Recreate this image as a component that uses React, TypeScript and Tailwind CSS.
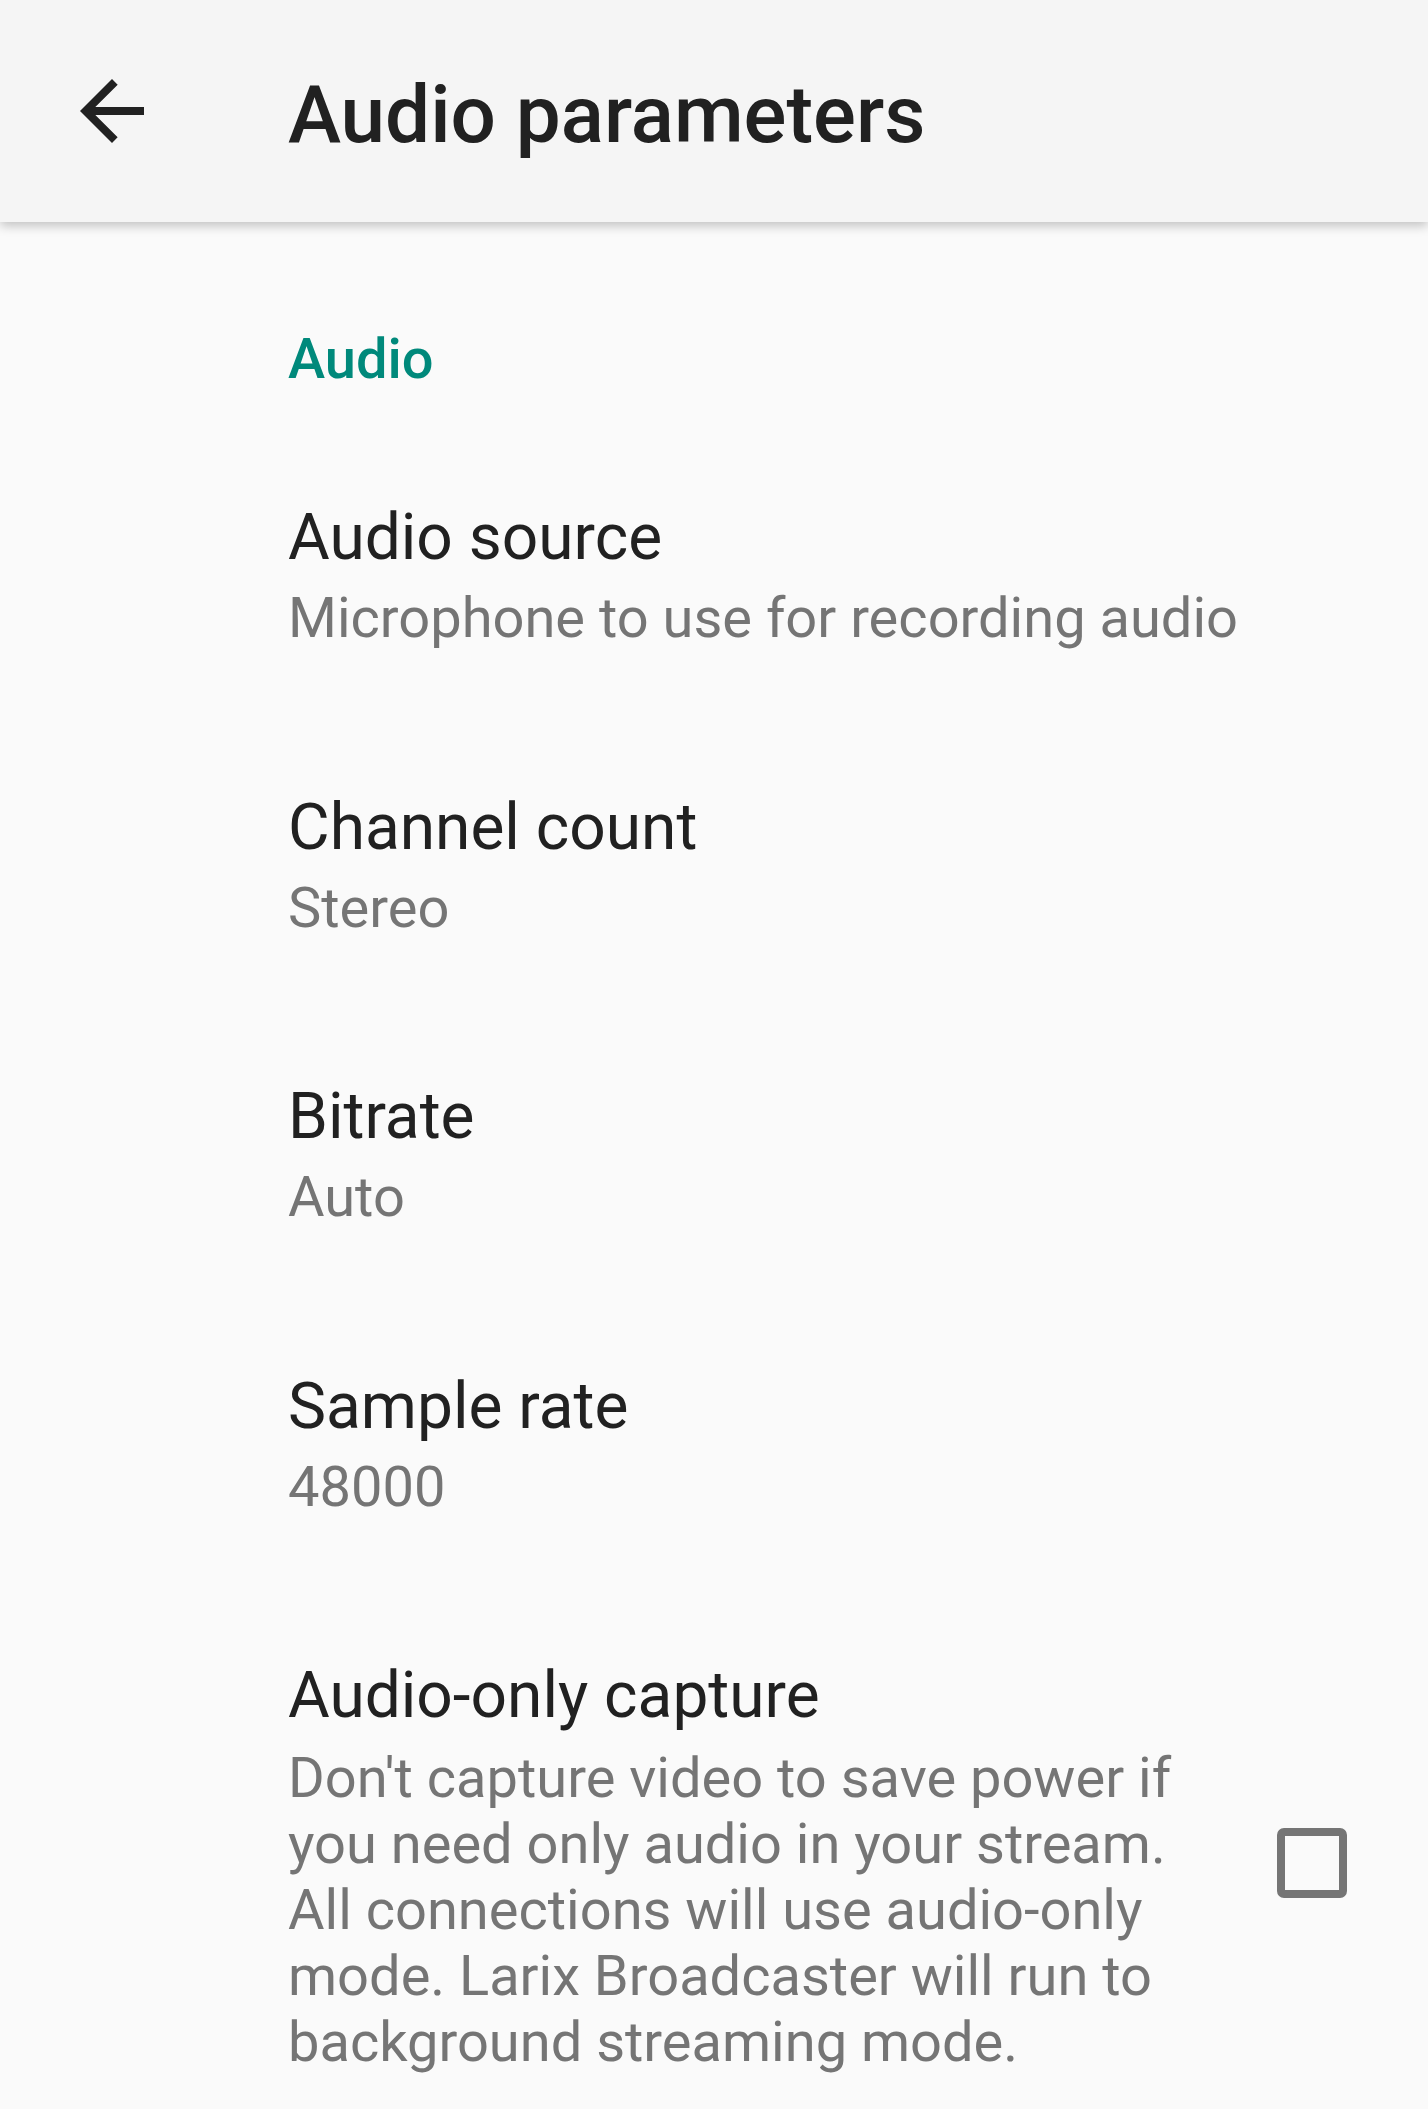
type Pref = {
    title: string;
    summary: string;
};

const prefs: Pref[] = [
    { title: 'Audio source', summary: 'Microphone to use for recording audio' },
    { title: 'Channel count', summary: 'Stereo' },
    { title: 'Bitrate', summary: 'Auto' },
    { title: 'Sample rate', summary: '48000' },
];

function BackArrow() {
    return (
        <svg viewBox="0 0 24 24" className="w-[96px] h-[96px]" fill="#212121">
            <path d="M20 11H7.83l5.59-5.59L12 4l-8 8 8 8 1.41-1.41L7.83 13H20v-2z" />
        </svg>
    );
}

export default function App() {
    return (
        <div className="h-[2109px] overflow-hidden bg-[#fafafa] font-['Roboto','Liberation_Sans',sans-serif]">
            {/* toolbar */}
            <header className="relative z-10 h-[222px] bg-[#f5f5f5] flex items-center pt-2 shadow-[0_4px_10px_rgba(0,0,0,0.22)]">
                <div className="ml-[64px] w-[96px] h-[96px] flex items-center justify-center -mt-2">
                    <BackArrow />
                </div>
                <h1 className="ml-[128px] text-[80px] leading-[94px] font-medium text-[#212121]">
                    Audio parameters
                </h1>
            </header>

            <main className="pl-[288px]">
                <div className="mt-[104px] text-[56px] leading-[66px] font-medium text-[#00897b]">
                    Audio
                </div>

                <div className="mt-[39px]">
                    {prefs.map(p => (
                        <div key={p.title} className="py-[69px]">
                            <div className="text-[64px] leading-[75px] text-[#212121]">{p.title}</div>
                            <div className="mt-[11px] text-[56px] leading-[65.5px] text-[#757575]">{p.summary}</div>
                        </div>
                    ))}

                    <div className="py-[69px] flex items-center justify-between pr-[81px]">
                        <div className="w-[900px]">
                            <div className="text-[64px] leading-[75px] text-[#212121]">Audio-only capture</div>
                            <div className="mt-[12px] text-[56px] leading-[66px] text-[#757575]">
                                Don't capture video to save power if you need only audio in your stream. All connections will use audio-only mode. Larix Broadcaster will run to background streaming mode.
                            </div>
                        </div>
                        <div className="mb-[8px] w-[70px] h-[70px] border-[8px] border-[#757575] rounded-[7px]" />
                    </div>
                </div>
            </main>
        </div>
    );
}
